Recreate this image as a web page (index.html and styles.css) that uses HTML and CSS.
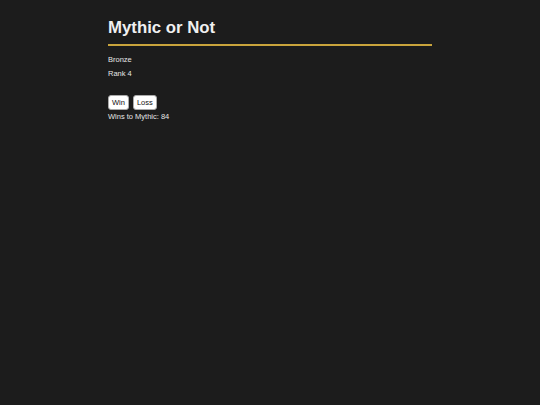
FILE: index.html
```html
<!DOCTYPE html>
<html>
<head>
<meta charset="utf-8">
<link rel="stylesheet" href="styles.css">
</head>
<body>
<div class="wrap">
  <h1 class="title">Mythic or Not</h1>
  <p class="line">Bronze</p>
  <p class="line">Rank 4</p>
  <div class="buttons">
    <button class="btn">Win</button>
    <button class="btn">Loss</button>
  </div>
  <p class="line">Wins to Mythic: 84</p>
</div>
</body>
</html>
```
FILE: styles.css
```css
html, body {
  margin: 0;
  padding: 0;
  background: #1c1c1c;
  color: #e6e6e6;
  font-family: "Liberation Sans", Arial, sans-serif;
}
.wrap {
  width: 324px;
  margin: 0 auto;
  padding-top: 18px;
}
.title {
  margin: 0;
  font-size: 16.8px;
  font-weight: bold;
  line-height: 20px;
  padding-bottom: 6px;
  border-bottom: 2px solid #c9a43c;
  color: #f0f0f0;
}
.line {
  margin: 0;
  font-size: 7.5px;
  line-height: 9px;
}
.title + .line {
  margin-top: 9px;
}
.line + .line {
  margin-top: 5px;
}
.buttons {
  display: flex;
  gap: 4px;
  margin-top: 17px;
  margin-bottom: 2px;
}
.btn {
  font-family: "Liberation Sans", Arial, sans-serif;
  font-size: 7.5px;
  background: #ffffff;
  color: #111;
  border: 1px solid #aaa;
  border-radius: 3px;
  padding: 0 3px;
  height: 15px;
  line-height: 13px;
}
```
